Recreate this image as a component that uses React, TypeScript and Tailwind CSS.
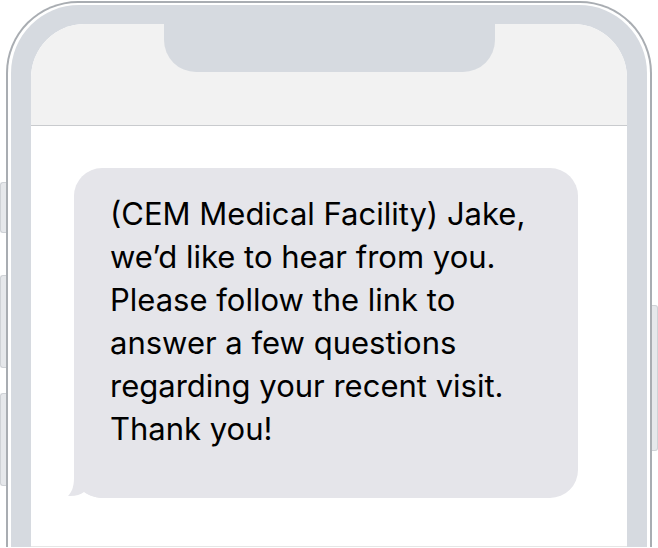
export default function App() {
  const lines = [
    "(CEM Medical Facility) Jake,",
    "we\u2019d like to hear from you.",
    "Please follow the link to",
    "answer a few questions",
    "regarding your recent visit.",
    "Thank you!",
  ];

  return (
    <div className="h-[548px] w-[658px] overflow-hidden bg-white">
      <div className="relative ml-[6px] mt-px w-[646px]">
        {/* side buttons */}
        <div className="absolute -left-[6px] top-[181px] h-[51px] w-[6px] rounded-l-[3px] border border-r-0 border-[#cfd2d6] bg-[#e6e8eb]" />
        <div className="absolute -left-[6px] top-[274px] h-[93px] w-[6px] rounded-l-[3px] border border-r-0 border-[#cfd2d6] bg-[#e6e8eb]" />
        <div className="absolute -left-[6px] top-[392px] h-[93px] w-[6px] rounded-l-[3px] border border-r-0 border-[#cfd2d6] bg-[#e6e8eb]" />
        <div className="absolute -right-[6px] top-[304px] h-[146px] w-[6px] rounded-r-[3px] border border-l-0 border-[#cfd2d6] bg-[#e6e8eb]" />

        <div className="rounded-t-[72px] border-2 border-b-0 border-[#a9adb2] bg-white px-[3px] pt-[2px]">
          <div className="rounded-t-[68px] bg-[#d6dae0] px-[20px] pt-[19px]">
            <div className="overflow-hidden rounded-t-[54px] bg-white">
              <div className="flex h-[102px] justify-center border-b border-[#c9cbce] bg-[#f2f2f2]">
                <div className="h-[48px] w-[331px] rounded-b-[32px] bg-[#d6dae0]" />
              </div>
              <div className="h-[421px] border-b border-[#e6e6e6] pl-[43px] pt-[42px]">
                <div className="relative w-[504px]">
                  <div className="h-[330px] rounded-[28px] bg-[#e5e5ea] pl-[36px] pt-[24px] font-['Inter',sans-serif] text-[31px] leading-[43px] text-black">
                    {lines.map((l) => (
                      <div key={l}>{l}</div>
                    ))}
                  </div>
                  <svg
                    className="absolute -left-[8px] top-[290px]"
                    width="40"
                    height="40"
                    viewBox="0 0 40 40"
                  >
                    <path
                      d="M8 0 L8 20 C8 30 5 35 2 38 C9 38.5 14 37 18 34 C24 38 30 40 40 40 L40 0 Z"
                      fill="#e5e5ea"
                    />
                  </svg>
                </div>
              </div>
            </div>
          </div>
        </div>
      </div>
    </div>
  );
}
